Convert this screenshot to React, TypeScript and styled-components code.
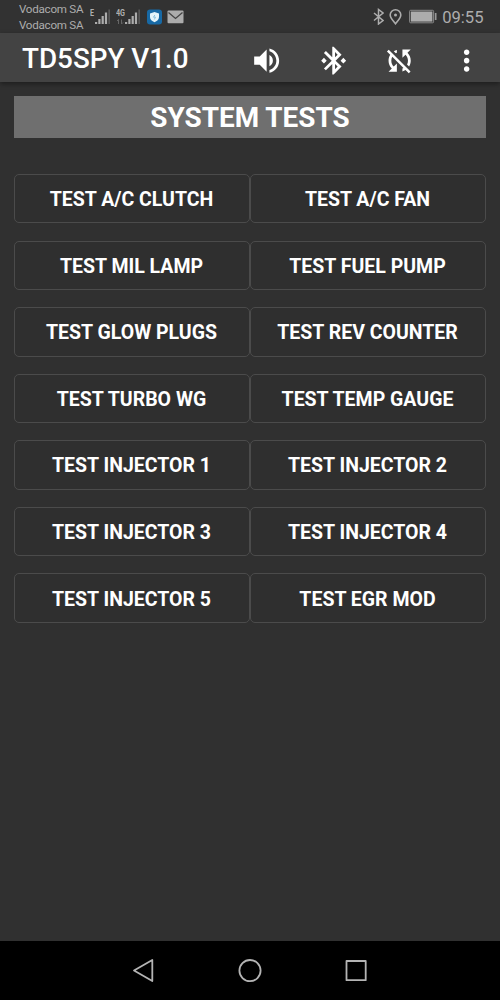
import React from "react";
import styled, { createGlobalStyle } from "styled-components";

const GlobalStyle = createGlobalStyle`
  body { margin: 0; background: #303030; font-family: Roboto, "Liberation Sans", sans-serif; }
`;

const Screen = styled.div`
  display: flex;
  flex-direction: column;
  width: 500px;
  height: 1000px;
  background: #303030;
  overflow: hidden;
`;

const StatusBar = styled.div`
  display: flex;
  flex: none;
  justify-content: space-between;
  height: 33px;
  padding: 0 16.5px 0 19px;
  box-sizing: border-box;
  background: #323232;
  color: #adadad;
`;

const StatusGroup = styled.div`
  display: flex;
  align-items: center;
`;

const Carriers = styled.div`
  width: 71px;
  padding-top: 2px;
  font-size: 11.6px;
  letter-spacing: -0.25px;
  line-height: 15.5px;
  white-space: nowrap;
`;

const StatusIcon = styled.svg<{ $gap?: number }>`
  display: block;
  flex: none;
  margin-right: ${(p) => p.$gap ?? 0}px;
`;

const Clock = styled.span`
  font-size: 16.6px;
  line-height: 20px;
  padding-top: 2px;
`;

const AppBar = styled.header`
  display: flex;
  flex: none;
  align-items: center;
  height: 49px;
  padding: 0 16.8px 0 22px;
  box-sizing: border-box;
  background: #434343;
  box-shadow: 0 2px 5px rgba(0, 0, 0, 0.4);
  color: #fff;
`;

const AppTitle = styled.h1`
  flex: 1;
  margin: 0;
  padding-top: 3px;
  font-size: 27.8px;
  font-weight: 500;
  line-height: 32px;
  white-space: nowrap;
`;

const Actions = styled.div`
  display: flex;
  gap: 33.4px;
  padding-top: 7px;
`;

const ActionIcon = styled.svg`
  display: block;
  width: 33.3px;
  height: 33.3px;
  fill: #fff;
`;

const Content = styled.main`
  flex: 1;
  padding: 14px 14px 0;
`;

const SectionTitle = styled.h2`
  margin: 0 0 36.5px;
  height: 41.5px;
  background: #6f6f6f;
  color: #fff;
  font-size: 27.9px;
  font-weight: 700;
  line-height: 44px;
  text-align: center;
`;

const TestGrid = styled.div`
  display: grid;
  grid-template-columns: 1fr 1fr;
  row-gap: 17.2px;
`;

const TestButton = styled.button`
  height: 49.4px;
  padding: 1.8px 1px 0 0;
  border: 1px solid #4b4b4b;
  border-radius: 5px;
  background: #2f2f2f;
  color: #fff;
  font-family: inherit;
  font-size: 19.5px;
  font-weight: 700;
`;

const NavBar = styled.nav`
  display: flex;
  flex: none;
  justify-content: center;
  align-items: center;
  gap: 78px;
  height: 59px;
  background: #000;
`;

const NavIcon = styled.svg`
  display: block;
  width: 28px;
  height: 28px;
  fill: none;
  stroke: #b4b4b4;
  stroke-width: 1.8;
  stroke-linejoin: round;
`;

const actionPaths = [
  "M3 9v6h4l5 5V4L7 9H3zm13.500 3c0-1.770-1.020-3.290-2.500-4.030v8.050c1.480-.730 2.500-2.250 2.500-4.020zM14 3.230v2.060c2.890.860 5 3.540 5 6.710s-2.110 5.850-5 6.710v2.060c4.010-.910 7-4.490 7-8.770s-2.990-7.860-7-8.770z",
  "M7 12l-2-2-2 2 2 2 2-2zm10.710-4.290L12 2h-1v7.590L6.410 5 5 6.410 10.590 12 5 17.590 6.410 19 11 14.410V22h1l5.710-5.710-4.300-4.290 4.300-4.290zM13 5.830l1.880 1.880L13 9.590V5.830zm1.880 10.460L13 18.170v-3.760l1.880 1.880zM19 10l-2 2 2 2 2-2-2-2z",
  "M10 6.350V4.260c-.8.210-1.550.540-2.230.960l1.460 1.460c.250-.120.500-.240.770-.330zm-7.140-.940l2.360 2.360C4.450 8.990 4 10.440 4 12c0 2.210.910 4.200 2.360 5.640L4 20h6v-6l-2.240 2.240C6.680 15.150 6 13.660 6 12c0-1 .250-1.940.680-2.770l8.080 8.080c-.250.130-.5.250-.770.340v2.090c.8-.210 1.550-.540 2.230-.960l2.360 2.360 1.270-1.270L4.140 4.140 2.860 5.410zM20 4h-6v6l2.240-2.240C17.320 8.850 18 10.340 18 12c0 1-.250 1.940-.680 2.770l1.460 1.460C19.550 15.010 20 13.560 20 12c0-2.210-.910-4.200-2.360-5.640L20 4z",
  "M12 8c1.100 0 2-.9 2-2s-.9-2-2-2-2 .9-2 2 .9 2 2 2zm0 2c-1.100 0-2 .9-2 2s.9 2 2 2 2-.9 2-2-.9-2-2-2zm0 6c-1.100 0-2 .9-2 2s.9 2 2 2 2-.9 2-2-.9-2-2-2z",
];

const tests = [
  "TEST A/C CLUTCH", "TEST A/C FAN",
  "TEST MIL LAMP", "TEST FUEL PUMP",
  "TEST GLOW PLUGS", "TEST REV COUNTER",
  "TEST TURBO WG", "TEST TEMP GAUGE",
  "TEST INJECTOR 1", "TEST INJECTOR 2",
  "TEST INJECTOR 3", "TEST INJECTOR 4",
  "TEST INJECTOR 5", "TEST EGR MOD",
];

const SignalText = styled.text`
  font: 700 9px Roboto, sans-serif;
  fill: #b0b0b0;
`;

function Signal({ label, width, gap, data }: { label: string; width: number; gap: number; data?: boolean }) {
  const x = width - 16;
  return (
    <StatusIcon width={width} height="18" $gap={gap}>
      <SignalText x="0" y="8" textLength={label.length > 1 ? 9 : 4} lengthAdjust="spacingAndGlyphs">{label}</SignalText>
      {data && <path d="M2.500 16v-4.500M1 13l1.500-1.500M5.500 11.500V16M7 14.500L5.500 16" stroke="#666" fill="none" />}
      {[2, 5, 8, 11.5].map((h, i) => (
        <rect key={h} x={x + i * 3.3} y={16 - h} width="2.2" height={h} fill="#acacac" />
      ))}
      <rect x={x + 13.4} y="1.5" width="1.5" height="14.5" fill="#5b5b5b" />
    </StatusIcon>
  );
}

export default function App() {
  return (
    <Screen>
      <GlobalStyle />
      <StatusBar>
        <StatusGroup>
          <Carriers>
            <div>Vodacom SA</div>
            <div>Vodacom SA</div>
          </Carriers>
          <Signal label="E" width={21} gap={5} />
          <Signal label="4G" width={25} gap={6} data />
          <StatusIcon width="15" height="16" $gap={5}>
            <rect y="0.5" width="15" height="15" rx="3" fill="#1769a5" />
            <path d="M7.500 3l4.500 1.500v3.500c0 2.500-2 4.200-4.500 5.200C5 12.200 3 10.500 3 8V4.500z" fill="#e4f4fa" />
            <path d="M7.800 6L6.500 8.200h2L7.300 10.500" fill="none" stroke="#68add0" strokeWidth="0.7" />
          </StatusIcon>
          <StatusIcon width="17" height="14">
            <rect x="0.5" y="0.5" width="16" height="12.8" rx="1" fill="#acacac" />
            <path d="M1.500 2.500l7 6 7-6" fill="none" stroke="#444" strokeWidth="1.3" />
          </StatusIcon>
        </StatusGroup>
        <StatusGroup>
          <StatusIcon width="11" height="17" $gap={5}>
            <path d="M1 5l9 7.500L5.500 16V1.500L10 5l-9 7.500" fill="none" stroke="#adadad" strokeWidth="1.5" />
          </StatusIcon>
          <StatusIcon width="13" height="17" $gap={7}>
            <path d="M6.500 15.800C4 12.600 1.200 9.800 1.200 7a5.300 5.300 0 0 1 10.600 0c0 2.800-2.800 5.600-5.300 8.800z" fill="none" stroke="#adadad" strokeWidth="1.6" />
            <circle cx="6.5" cy="7" r="1.5" fill="#adadad" />
          </StatusIcon>
          <StatusIcon width="28" height="15" $gap={5}>
            <rect x="0.6" y="1.3" width="24" height="12.5" rx="1" fill="none" stroke="#8b8b8b" />
            <rect x="1.8" y="2.5" width="21.6" height="10.1" fill="#acacac" />
            <rect x="25.8" y="4" width="1.7" height="7" fill="#999" />
          </StatusIcon>
          <Clock>09:55</Clock>
        </StatusGroup>
      </StatusBar>
      <AppBar>
        <AppTitle>TD5SPY V1.0</AppTitle>
        <Actions>
          {actionPaths.map((d) => (
            <ActionIcon key={d} viewBox="0 0 24 24"><path d={d} /></ActionIcon>
          ))}
        </Actions>
      </AppBar>
      <Content>
        <SectionTitle>SYSTEM TESTS</SectionTitle>
        <TestGrid>
          {tests.map((t) => <TestButton key={t}>{t}</TestButton>)}
        </TestGrid>
      </Content>
      <NavBar>
        <NavIcon viewBox="0 0 28 28"><path d="M4 13.500L22.300 3v21z" /></NavIcon>
        <NavIcon viewBox="0 0 28 28"><circle cx="14" cy="13.6" r="10.6" /></NavIcon>
        <NavIcon viewBox="0 0 28 28"><rect x="4.5" y="4" width="19.2" height="19.2" /></NavIcon>
      </NavBar>
    </Screen>
  );
}
